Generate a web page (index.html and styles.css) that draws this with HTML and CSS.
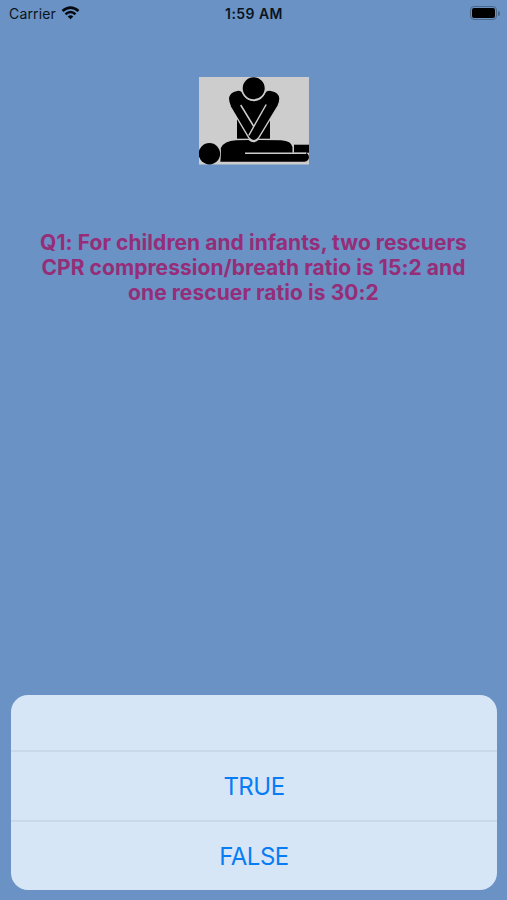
FILE: index.html
```
<!DOCTYPE html>
<html lang="en">
  <head>
    <meta charset="UTF-8" />
    <meta name="viewport" content="width=device-width, initial-scale=1.0" />
    <title>CPR Quiz</title>
    <link rel="stylesheet" href="styles.css">
  </head>
  <body>
    <div class="screen">
      <!-- Status bar -->
      <header class="status-bar">
        <div class="carrier">
          <span class="carrier-name">Carrier</span>
          <svg class="wifi" viewBox="0 0 18 14" aria-hidden="true">
            <path d="M1 5 Q9 -1.8 17 5" />
            <path d="M4 8.2 Q9 3.8 14 8.2" />
            <path class="wifi-dot" d="M6.2 10.4 Q9 8 11.8 10.4 L9 13.3 Z" />
          </svg>
        </div>
        <span class="time">1:59 AM</span>
        <div class="battery">
          <div class="battery-case"><div class="battery-level"></div></div>
          <div class="battery-tip"></div>
        </div>
      </header>

      <!-- Question -->
      <main class="question">
        <svg class="picture" viewBox="0 0 110 87.5" role="img" aria-label="CPR">
          <rect class="paper" width="110" height="87.5" />
          <rect x="38" y="42" width="33" height="19.7" />
          <!-- rescuer -->
          <path class="edge" d="M38 13.2 Q41 12.6 43 14.5 Q47 23.5 54.7 23.5 Q62.5 23.5 66.5 14.5 Q69 12.6 72 13.2 Q80.5 14.5 81 21.5 Q81 25 79 29 L59.5 61 Q54.5 66.5 50 61 L31.5 30 Q29.3 25 29.3 21.5 Q30 14.5 38 13.2 Z" />
          <circle class="edge" cx="54.7" cy="11.3" r="11.7" />
          <path class="line" d="M41.7 28 L54.5 49 M67.2 27.5 L57 45.5 L49.8 58.5" />
          <!-- patient -->
          <circle cx="10.4" cy="76.7" r="10.7" />
          <path d="M21.3 84.8 Q22.2 77 21.8 71 Q25 63.7 37 63.2 L49.5 63 Q54.5 67.5 59.5 63 L82 63.2 Q92.5 64 93.5 70 V75.8 H105 Q110 76 110 80.5 Q109.5 84.5 105 84.8 Z" />
          <rect x="95" y="67.7" width="15" height="8" />
          <path class="line" d="M46 76.3 H107" />
        </svg>
        <h1 class="question-text">
          Q1: For children and infants, two rescuers<br />
          CPR compression/breath ratio is 15:2 and<br />
          one rescuer ratio is 30:2
        </h1>
      </main>

      <!-- Answers -->
      <div class="sheet">
        <div class="sheet-title"></div>
        <button class="answer">TRUE</button>
        <button class="answer">FALSE</button>
      </div>
    </div>
  </body>
</html>
```
FILE: styles.css
```
* {
  box-sizing: border-box;
  margin: 0;
  padding: 0;
}

body,
html {
  height: 100%;
  font-family: Inter, sans-serif;
  background-color: #6a92c4;
}

.screen {
  height: 100%;
  display: flex;
  flex-direction: column;
}

/* Status bar */
.status-bar {
  height: 27px;
  padding: 0 7px 0 9px;
  display: grid;
  grid-template-columns: 1fr auto 1fr;
  align-items: center;
  font-size: 14px;
  color: #0b1420;
}

.carrier {
  display: flex;
  align-items: center;
  gap: 5px;
}

.carrier-name {
  letter-spacing: 0.15px;
}

.wifi {
  width: 19px;
  height: 14px;
  margin-top: -1px;
  fill: none;
  stroke: #050a10;
  stroke-width: 2.6;
}

.wifi .wifi-dot {
  fill: #050a10;
  stroke: none;
}

.time {
  margin-right: 1px;
  font-weight: 600;
  letter-spacing: 0.45px;
}

.battery {
  justify-self: end;
  display: flex;
  align-items: center;
  gap: 1px;
  margin-top: -1px;
}

.battery-case {
  width: 27px;
  height: 14px;
  padding: 1px;
  border: 1px solid #496789;
  border-radius: 4px;
}

.battery-level {
  height: 100%;
  background-color: #000;
  border-radius: 2px;
}

.battery-tip {
  width: 2px;
  height: 5px;
  background-color: #496789;
  border-radius: 0 2px 2px 0;
}

/* Question */
.question {
  flex: 1;
  display: flex;
  flex-direction: column;
  align-items: center;
  padding-top: 50px;
}

.picture {
  width: 110px;
  height: 87.5px;
}

.paper {
  fill: #cdcdcd;
}

.edge {
  stroke: #cdcdcd;
  stroke-width: 1.4;
}

.line {
  fill: none;
  stroke: #cdcdcd;
  stroke-width: 1.5;
}

.question-text {
  margin-top: 65px;
  font-size: 21px;
  font-weight: 700;
  letter-spacing: 0.06px;
  line-height: 25px;
  text-align: center;
  white-space: nowrap;
  color: #962d78;
}

/* Answers */
.sheet {
  margin: 0 10px 10px 11px;
  background-color: #d7e6f6;
  border-radius: 17px;
  overflow: hidden;
}

.sheet-title {
  height: 55px;
}

.answer {
  display: block;
  width: 100%;
  height: 70px;
  border: none;
  border-top: 2px solid #c9d9ea;
  background: none;
  font-family: inherit;
  font-size: 24px;
  letter-spacing: -0.5px;
  color: #087cf5;
  cursor: pointer;
}
```
